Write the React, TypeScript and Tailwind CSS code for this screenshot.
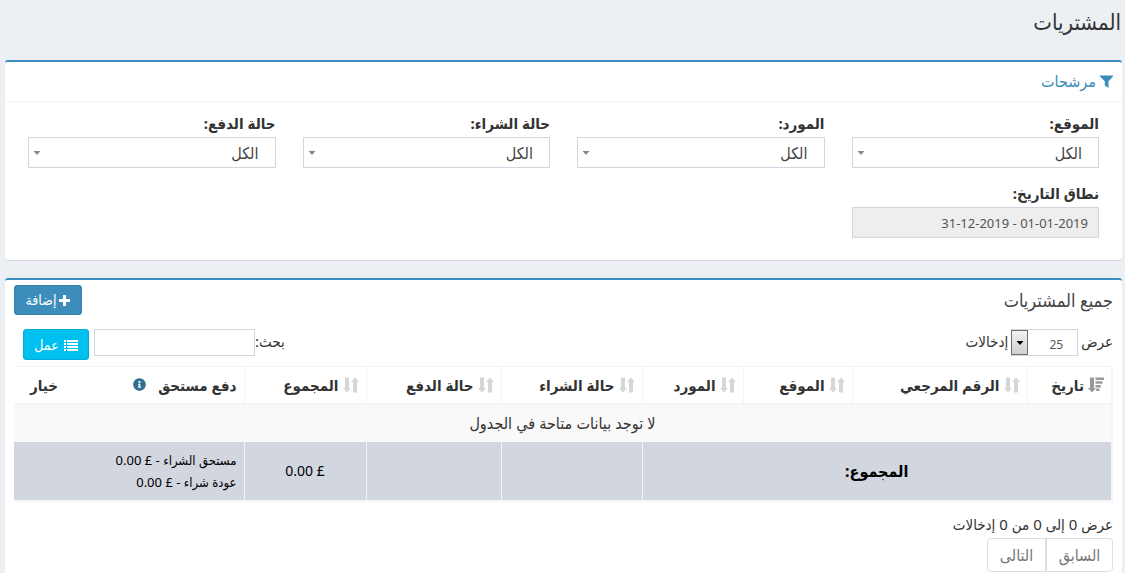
import { ReactNode } from 'react'
import { FaInfoCircle } from 'react-icons/fa'

type Column = {
  title: string
  width: string
  sort?: 'active' | 'idle'
  info?: boolean
}

const filters = [
  { id: 'location', label: 'الموقع:' },
  { id: 'supplier', label: 'المورد:' },
  { id: 'purchase-status', label: 'حالة الشراء:' },
  { id: 'payment-status', label: 'حالة الدفع:' },
]

const columns: Column[] = [
  { title: 'تاريخ', width: 'w-[85px]', sort: 'active' },
  { title: 'الرقم المرجعي', width: 'w-[175px]', sort: 'idle' },
  { title: 'الموقع', width: 'w-[109px]', sort: 'idle' },
  { title: 'المورد', width: 'w-[101px]', sort: 'idle' },
  { title: 'حالة الشراء', width: 'w-[141px]', sort: 'idle' },
  { title: 'حالة الدفع', width: 'w-[135px]', sort: 'idle' },
  { title: 'المجموع', width: 'w-[122px]', sort: 'idle' },
  { title: 'دفع مستحق', width: '', info: true },
  { title: 'خيار', width: 'w-[51px]' },
]

const FilterIcon = () => (
  <svg viewBox="0 0 13 13" className="size-[13px] fill-current" aria-hidden="true">
    <path d="M0 0.5h13v1L8.5 6.3V13L4.8 10.4V6.3L0 1.5z" />
  </svg>
)

const PlusIcon = () => (
  <svg viewBox="0 0 11 11" className="size-[11px] fill-current" aria-hidden="true">
    <path d="M4 0h3v4h4v3H7v4H4V7H0V4h4z" />
  </svg>
)

const ListIcon = () => (
  <svg viewBox="0 0 14 12" className="h-3 w-[14px] fill-current" aria-hidden="true">
    <path d="M0 1h2v2H0zM3 1h11v2H3zM0 4h2v2H0zM3 4h11v2H3zM0 7h2v2H0zM3 7h11v2H3zM0 10h2v2H0zM3 10h11v2H3z" />
  </svg>
)

const SortIcon = ({ active }: { active: boolean }) => (
  <svg
    viewBox="0 0 16 16"
    className={`size-4 shrink-0 ${active ? 'fill-[#999999]' : 'fill-[#d6d6d6]'}`}
    aria-hidden="true"
  >
    <path d="M2 0.5h4v10.5h2L4 15.5 0 11h2z" />
    {active ? (
      <path d="M7.5 0.5H16v2.5H7.5zM7.5 4.2H14.5v2.5H7.5zM7.5 7.9H12.8v2.5H7.5zM8.2 11.6H11.5v2.5H8.2z" />
    ) : (
      <path d="M10 15.5h4V5h2L12 0.5 8 5h2z" />
    )}
  </svg>
)

const Box = ({ children }: { children: ReactNode }) => (
  <section className="rounded-[3px] border-t-2 border-[#3c8dbc] bg-white shadow-[0_1px_1px_rgba(0,0,0,0.1)]">
    {children}
  </section>
)

const FilterSelect = ({ id, label }: { id: string; label: string }) => (
  <div>
    <label htmlFor={id} className="block text-[15px] leading-5 font-bold">
      {label}
    </label>
    <div className="relative mt-1">
      <select
        id={id}
        className="block h-[31px] w-full appearance-none border border-[#d2d6de] bg-white ps-4 pe-5 text-base text-[#444444]"
      >
        <option>الكل</option>
      </select>
      <svg
        viewBox="0 0 8 4"
        className="pointer-events-none absolute top-[14px] left-[5px] h-1 w-2 fill-[#888888]"
        aria-hidden="true"
      >
        <path d="M0.5 0h7L4 4z" />
      </svg>
    </div>
  </div>
)

const Filters = () => (
  <Box>
    <h2 className="border-b border-[#f4f4f4] px-[9px] pt-2 pb-[9px] text-base leading-[22px]">
      <a href="#filters" className="flex items-center gap-1 text-[#3c8dbc]">
        <FilterIcon />
        مرشحات
      </a>
    </h2>
    <div
      id="filters"
      className="grid grid-cols-4 gap-x-[27px] gap-y-[15px] px-[23px] pt-[11px] pb-[22px]"
    >
      {filters.map((filter) => (
        <FilterSelect key={filter.id} {...filter} />
      ))}
      <div>
        <label htmlFor="date-range" className="block text-[15px] leading-5 font-bold">
          نطاق التاريخ:
        </label>
        <input
          id="date-range"
          readOnly
          defaultValue="01-01-2019 - 31-12-2019"
          className="mt-1 block h-[31px] w-full border border-[#d2d6de] bg-[#eeeeee] px-[10px] text-[13px] text-[#555555]"
        />
      </div>
    </div>
  </Box>
)

const Toolbar = () => (
  <div className="flex items-start justify-between">
    <div className="flex items-start gap-[3px] text-[15px] leading-6">
      <label htmlFor="page-length">عرض</label>
      <div className="relative">
        <select
          id="page-length"
          className="block h-[27px] w-[67px] appearance-none border border-[#d2d6de] bg-white ps-[14px] pe-5 pt-1 text-xs text-[#555555]"
        >
          <option>25</option>
        </select>
        <span className="pointer-events-none absolute top-px left-0 flex h-[25px] w-[17px] items-center justify-center border border-[#707070] bg-linear-to-b from-[#f2f2f2] to-[#cfcfcf]">
          <svg viewBox="0 0 8 4" className="h-1 w-2" aria-hidden="true">
            <path d="M0.5 0h7L4 4z" />
          </svg>
        </span>
      </div>
      <span>إدخالات</span>
    </div>
    <div className="flex items-start pe-[9px]">
      <label htmlFor="search" className="text-[15px] leading-6">
        بحث:
      </label>
      <input
        id="search"
        type="search"
        className="h-[27px] w-[161px] border border-[#d2d6de] bg-white px-2 text-xs"
      />
      <button
        type="button"
        className="ms-[5px] flex h-[31px] w-[66px] items-center justify-center gap-[5px] rounded-[3px] border border-[#00acd6] bg-[#00c0ef] text-sm text-white"
      >
        <ListIcon />
        عمل
      </button>
    </div>
  </div>
)

const PurchasesTable = () => (
  <table className="mt-[6px] w-full table-fixed border-collapse text-base">
    <thead>
      <tr className="h-[37px] border-t border-b-2 border-[#f4f4f4]">
        {columns.map(({ title, width, sort, info }) => (
          <th
            key={title}
            scope="col"
            className={`border-[#f4f4f4] px-[7px] py-0 text-[15px] font-bold first:border-s-2 ${width} ${sort ? 'border-e' : ''}`}
          >
            <span className="flex items-center gap-1 whitespace-nowrap">
              {sort && <SortIcon active={sort === 'active'} />}
              {title}
              {info && <FaInfoCircle className="ms-2 size-[13px] text-[#31708f]" />}
            </span>
          </th>
        ))}
      </tr>
    </thead>
    <tbody>
      <tr className="h-[38px] bg-[#f9f9f9]">
        <td colSpan={9} className="border-s-2 border-[#f4f4f4] text-center">
          لا توجد بيانات متاحة في الجدول
        </td>
      </tr>
    </tbody>
    <tfoot>
      <tr className="h-[59px] border-b-2 border-[#f4f4f4] bg-[#d2d6de] text-center text-black">
        <td colSpan={4} className="border-s-2 border-e border-[#f4f4f4] font-bold">
          المجموع:
        </td>
        <td className="border-e border-[#f4f4f4]" />
        <td className="border-e border-[#f4f4f4]" />
        <td className="border-e border-[#f4f4f4] text-sm">£ 0.00</td>
        <td colSpan={2} className="px-[7px] text-start text-[13px] leading-[22px]">
          <div>مستحق الشراء - £ 0.00</div>
          <div>عودة شراء - £ 0.00</div>
        </td>
      </tr>
    </tfoot>
  </table>
)

const Pagination = () => (
  <nav className="flex text-base text-[#777777]" aria-label="صفحات">
    <button
      type="button"
      disabled
      className="h-[34px] w-[67px] rounded-s border border-[#dddddd] bg-white"
    >
      السابق
    </button>
    <button
      type="button"
      disabled
      className="h-[34px] w-[59px] rounded-e border border-[#dddddd] bg-white"
    >
      التالى
    </button>
  </nav>
)

export default function App() {
  return (
    <main
      dir="rtl"
      lang="ar"
      className="min-h-screen bg-[#ecf0f5] ps-[3px] pe-[5px] font-['Noto_Sans','DejaVu_Sans_Condensed','DejaVu_Sans',sans-serif] text-[#333333]"
    >
      <h1 className="px-px pt-[6px] pb-6 text-[22px] leading-[30px]">المشتريات</h1>
      <Filters />
      <div className="mt-[18px]">
        <Box>
          <div className="px-[9px] pb-[10px]">
            <div className="flex items-center justify-between py-[5px]">
              <h2 className="text-lg leading-[30px] text-[#444444]">جميع المشتريات</h2>
              <button
                type="button"
                className="flex h-[30px] w-[68px] items-center justify-center gap-[3px] rounded-[3px] border border-[#367fa9] bg-[#3c8dbc] text-sm text-white"
              >
                <PlusIcon />
                إضافة
              </button>
            </div>
            <div className="pt-[9px]">
              <Toolbar />
            </div>
            <PurchasesTable />
            <p className="pt-3 pb-1 text-[15px] leading-5">عرض 0 إلى 0 من 0 إدخالات</p>
            <Pagination />
          </div>
        </Box>
      </div>
    </main>
  )
}
